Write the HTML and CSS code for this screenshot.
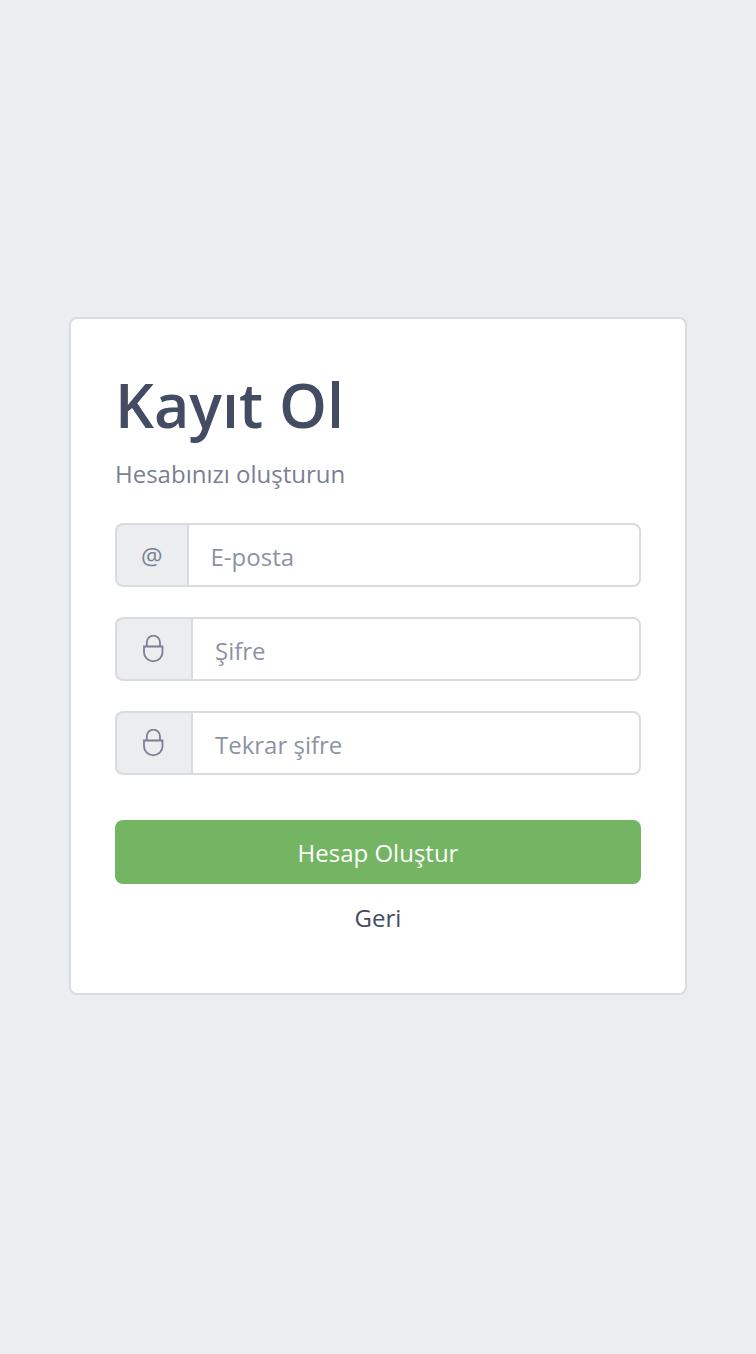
FILE: index.html
```html
<!DOCTYPE html>
<html lang="tr">
<head>
<meta charset="utf-8">
<meta name="viewport" content="width=device-width, initial-scale=1">
<title>Kayıt Ol</title>
<link rel="stylesheet" href="styles.css">
</head>
<body>
<main class="page">
  <form class="card">
    <h1 class="title">Kayıt Ol</h1>
    <p class="subtitle">Hesabınızı oluşturun</p>
    <div class="group">
      <label class="addon addon-text" for="email">@</label>
      <input class="field" id="email" type="email" placeholder="E-posta">
    </div>
    <div class="group">
      <label class="addon" for="password" aria-label="Şifre">
        <svg class="lock" viewBox="0 0 28 28" aria-hidden="true"><path d="M4 11.5H22.5V17.2A9.25 9.2 0 0 1 4 17.2ZM6.8 11.5V7.3A6.6 6.6 0 0 1 20 7.3V11.5"/></svg>
      </label>
      <input class="field" id="password" type="password" placeholder="Şifre">
    </div>
    <div class="group">
      <label class="addon" for="repeat" aria-label="Tekrar şifre">
        <svg class="lock" viewBox="0 0 28 28" aria-hidden="true"><path d="M4 11.5H22.5V17.2A9.25 9.2 0 0 1 4 17.2ZM6.8 11.5V7.3A6.6 6.6 0 0 1 20 7.3V11.5"/></svg>
      </label>
      <input class="field" id="repeat" type="password" placeholder="Tekrar şifre">
    </div>
    <button class="submit" type="submit">Hesap Oluştur</button>
    <a class="back" href="#">Geri</a>
  </form>
</main>
</body>
</html>
```
FILE: styles.css
```css
*, *::before, *::after { box-sizing: border-box; }
body {
  margin: 0;
  background: #ebedef;
  color: #7a8094;
  font-family: "Segoe UI", "Open Sans", "Noto Sans", sans-serif;
  font-size: 24px;
  line-height: 38px;
}
.page {
  min-height: 100vh;
  display: flex;
  flex-direction: column;
  justify-content: center;
  padding: 0 69px 42px;
}
.card {
  display: flex;
  flex-direction: column;
  background: #fff;
  border: 2px solid #d8dbe0;
  border-radius: 8px;
  padding: 44px 44px 56px;
}
.title {
  margin: 4px 0 12px;
  color: #444c63;
  font-size: 61px;
  line-height: 76px;
  font-weight: 600;
}
.subtitle { margin: 0 0 30px; }
.group { display: flex; height: 64px; margin-bottom: 30px; }
.addon {
  display: flex;
  align-items: center;
  padding: 0 23px;
  background: #ebedef;
  border: 2px solid #d8dbe0;
  border-right: 0;
  border-radius: 8px 0 0 8px;
}
.addon-text { padding: 2px 24px 0; }
.lock { width: 28px; height: 28px; fill: none; stroke: currentColor; stroke-width: 1.8; }
.field {
  flex: 1;
  min-width: 0;
  padding: 4px 22px 0;
  border: 2px solid #d8dbe0;
  border-radius: 0 8px 8px 0;
  background: #fff;
  color: #7a8094;
  font: inherit;
}
.field::placeholder { color: #8c93a3; opacity: 1; }
.submit {
  height: 64px;
  margin: 15px 0;
  padding: 2px 24px 0;
  border: 0;
  border-radius: 8px;
  background: #73b562;
  color: #fff;
  font: inherit;
}
.back { align-self: center; color: #444c63; text-decoration: none; }
```
